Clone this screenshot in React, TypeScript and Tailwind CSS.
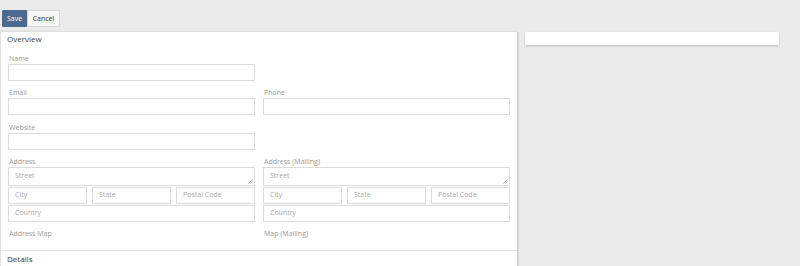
import React from "react";

const font = { fontFamily: '"Open Sans", "Liberation Sans", sans-serif' };

function Label({ children }: { children: React.ReactNode }) {
  return <div className="h-[10px] leading-[12px] text-[7px] text-[#999] pl-[1px] mb-[1px]">{children}</div>;
}

function Input({ placeholder, className = "" }: { placeholder?: string; className?: string }) {
  return (
    <div className={"h-[17px] border border-[#dcdcdc] bg-white flex items-center px-[6px] text-[7px] text-[#aaa] " + className}>
      {placeholder}
    </div>
  );
}

function Street() {
  return (
    <div className="relative h-[19px] mt-[1px] border border-[#dcdcdc] bg-white flex items-start pt-[3px] px-[6px] text-[7px] text-[#aaa]">
      Street
      <svg className="absolute right-[1px] bottom-[1px]" width="5" height="5" viewBox="0 0 5 5">
        <path d="M4.5 0.5 L0.5 4.5 M4.5 2.5 L2.5 4.5" stroke="#999" strokeWidth="0.7" />
      </svg>
    </div>
  );
}

function AddressBlock({ label, map }: { label: string; map: string }) {
  return (
    <div>
      <Label>{label}</Label>
      <Street />
      <div className="grid grid-cols-3 gap-x-[5px] mt-[1px]">
        <Input placeholder="City" />
        <Input placeholder="State" />
        <Input placeholder="Postal Code" />
      </div>
      <Input placeholder="Country" className="mt-[1px]" />
      <div className="mt-[6px]">
        <Label>{map}</Label>
      </div>
    </div>
  );
}

export default function App() {
  return (
    <div className="w-[800px] h-[266px] bg-[#ebebeb] overflow-hidden" style={font}>
      <div className="pt-[10px] pl-[2px] flex">
        <button className="h-[17px] w-[25px] bg-[#4a6b8f] text-white text-[7px] leading-none border border-[#4a6b8f] rounded-l-[1px]">
          Save
        </button>
        <button className="h-[17px] w-[33px] bg-[#f7f7f7] text-[#333] text-[7px] leading-none border border-[#d6d6d6] rounded-r-[1px]">
          Cancel
        </button>
      </div>
      <div className="flex gap-[8px] mt-[5px]">
        <div className="w-[517px] h-[240px] bg-white border-l border-[#e2e2e2] shadow-[1px_0_2px_rgba(0,0,0,0.18)]">
          <div className="h-[14px] leading-[14px] text-[8px] text-[#444] pl-[6px]">Overview</div>
          <div className="pt-[7px] pl-[7px] pr-[7px] h-[205px] border-b border-[#e6e6e6]">
            <div className="grid grid-cols-2 gap-x-[8px] gap-y-[6px]">
              <div>
                <Label>Name</Label>
                <Input />
              </div>
              <div />
              <div>
                <Label>Email</Label>
                <Input />
              </div>
              <div>
                <Label>Phone</Label>
                <Input />
              </div>
              <div className="pt-[1px]">
                <Label>Website</Label>
                <Input />
              </div>
              <div />
              <AddressBlock label="Address" map="Address Map" />
              <AddressBlock label="Address (Mailing)" map="Map (Mailing)" />
            </div>
          </div>
          <div className="h-[14px] leading-[14px] text-[8px] text-[#444] pl-[6px] pt-[1px]">Details</div>
        </div>
        <div className="w-[254px] h-[13px] bg-white shadow-[0_1px_2px_rgba(0,0,0,0.2)]" />
      </div>
    </div>
  );
}
